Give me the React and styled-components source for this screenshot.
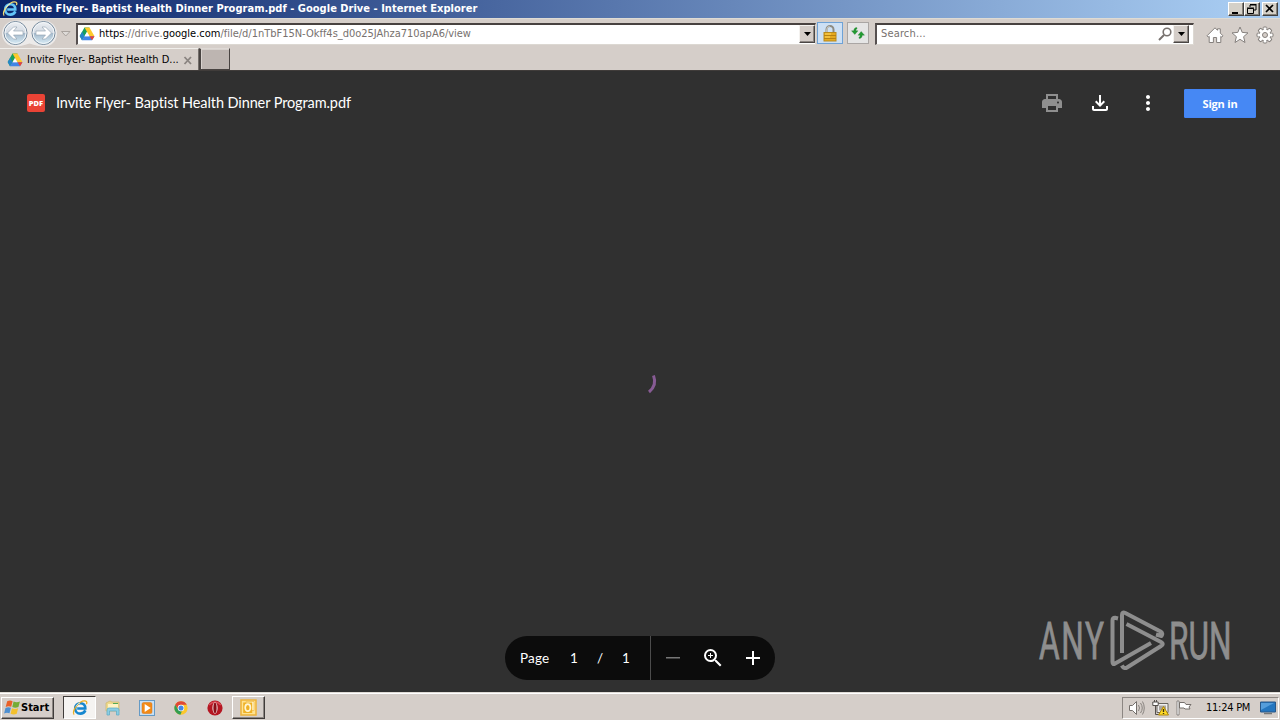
import React from "react";
import styled, { createGlobalStyle } from "styled-components";

const Global = createGlobalStyle`
  * { box-sizing: border-box; }
  body { margin: 0; overflow: hidden; background: #303030; }
  svg { display: block; flex: none; overflow: visible; }
`;

const ui = `"DejaVu Sans Condensed", "DejaVu Sans", sans-serif`;

const Screen = styled.div`
  width: 1280px;
  height: 720px;
  display: flex;
  flex-direction: column;
  overflow: hidden;
  font-family: ${ui};
  font-stretch: condensed;
  font-size: 11px;
`;

const Label = styled.span`
  white-space: pre;
  flex: none;
  line-height: 14px;
  margin-left: ${(p) => p.$left || 0}px;
  letter-spacing: ${(p) => p.$spacing || 0}px;
  color: ${(p) => p.$color || "#000"};
  font-weight: ${(p) => (p.$bold ? 700 : 400)};
`;

const TitleBar = styled.header`
  height: 18px;
  flex: none;
  display: flex;
  align-items: center;
  gap: 1px;
  padding: 0 2px;
  background: linear-gradient(90deg, #0a246a 0%, #a6caf0 96%);
`;

const WindowButtons = styled.div`
  margin-left: auto;
  display: flex;
`;

const WindowButton = styled.div`
  width: 16px;
  height: 14px;
  margin-left: ${(p) => p.$gap || 0}px;
  background: #d4d0c8;
  border: 1px solid;
  border-color: #fff #404040 #404040 #fff;
  box-shadow: inset -1px -1px #858078;
`;

const NavBar = styled.div`
  height: 30px;
  flex: none;
  display: flex;
  align-items: flex-start;
  padding: 3px 6px 0 1px;
  background: #d5cec9;
  border-top: 1px solid #dedbd4;
`;

const History = styled.div`
  width: 75px;
  margin-top: -2px;
`;

const Field = styled.div`
  width: ${(p) => p.$width}px;
  height: 22px;
  margin-left: ${(p) => p.$left || 0}px;
  margin-top: 1px;
  display: flex;
  align-items: center;
  padding: 0 ${(p) => p.$end || 0}px 2px ${(p) => p.$pad}px;
  background: #fff;
  border: 1px solid #dcd8d2;
  border-top: 2px solid #484240;
  border-left: 2px solid #565050;
`;

const DropButton = styled.div`
  width: 16px;
  height: 18px;
  margin-left: ${(p) => p.$left || "auto"};
  display: grid;
  place-items: center;
  background: #d4cdc8;
  border: 1px solid;
  border-color: #f4f2ef #4a4644 #4a4644 #f4f2ef;
  box-shadow: inset -1px -1px #8c8682;
`;

const ToolButton = styled.div`
  width: ${(p) => p.$width}px;
  height: 22px;
  margin-left: ${(p) => p.$gap}px;
  display: grid;
  place-items: center;
  background: ${(p) => p.$bg};
  border: 1px solid ${(p) => p.$border};
`;

const NavTools = styled.div`
  margin-left: auto;
  margin-top: 4px;
  display: flex;
  gap: 7px;
`;

const TabRow = styled.div`
  height: 23px;
  flex: none;
  display: flex;
  align-items: flex-start;
  background: #d5cec9;
  border-bottom: 1px solid #403c3a;
`;

const Tab = styled.div`
  width: 199px;
  height: 22px;
  display: flex;
  align-items: center;
  padding: 1px 6px 0 7px;
  background: #d5cec9;
  border-top: 1px solid #f0eeeb;
  border-right: 1px solid #75706c;
`;

const NewTab = styled.div`
  width: 31px;
  height: 22px;
  background: #bdb5b1;
  border: 1px solid #484341;
  border-left-width: 2px;
  border-top-color: #ded9d5;
  box-shadow: inset 1px 1px #d8d2ce;
`;

const End = styled.div`
  margin-left: auto;
`;

const Viewer = styled.main`
  height: 621px;
  flex: none;
  display: flex;
  flex-direction: column;
  background: #303030;
  position: relative;
  font-family: "Open Sans", sans-serif;
  font-stretch: normal;
`;

const ViewerHeader = styled.div`
  height: 64px;
  flex: none;
  display: flex;
  align-items: center;
  padding: 0 24px 0 27px;
`;

const PdfBadge = styled.div`
  width: 18px;
  height: 18px;
  flex: none;
  margin-right: 11px;
  border-radius: 2px;
  background: #ea4335;
  color: #fff;
  font: 800 7.5px/18px "Open Sans", sans-serif;
  text-align: center;
`;

const FileName = styled.h1`
  margin: 0;
  white-space: nowrap;
  color: #fff;
  font: 400 14.5px/20px Lato, sans-serif;
  letter-spacing: -0.1px;
`;

const Actions = styled.div`
  margin-left: auto;
  display: flex;
  align-items: center;
  gap: 24px;
`;

const SignIn = styled.button`
  width: 72px;
  height: 29px;
  padding: 0;
  color: #fff;
  background: #4688f4;
  border: 1px solid #4384f5;
  border-radius: 1px;
  font: 700 11px/27px "Open Sans", sans-serif;
  letter-spacing: -0.2px;
`;

const Loading = styled.div`
  flex: 1;
  display: flex;
  justify-content: center;
  padding-top: 235px;
`;

const PageControls = styled.div`
  width: 270px;
  height: 44px;
  flex: none;
  margin: 0 auto 12px;
  display: flex;
  align-items: center;
  border-radius: 22px;
  background: #0c0c0c;
  color: #fff;
  font: 400 13.5px/20px Lato, sans-serif;
`;

const PageInfo = styled.div`
  width: 146px;
  height: 44px;
  display: grid;
  grid-template-columns: 44px 20px 32px 20px;
  align-items: center;
  padding-left: 15px;
  border-right: 1px solid #4c4c4c;
  & > span:first-child { letter-spacing: 0.2px; }
  & > span:not(:first-child) { text-align: center; }
`;

const ZoomTools = styled.div`
  display: flex;
  gap: 16px;
  padding-left: 10px;
`;

const Watermark = styled.div`
  position: absolute;
  left: 1036px;
  top: 539px;
`;

const Taskbar = styled.footer`
  height: 28px;
  flex: none;
  display: flex;
  align-items: center;
  padding: 2px 1px 0;
  background: #d5cec9;
  border-top: 1px solid #e0dcd6;
  box-shadow: inset 0 1px #fff;
`;

const StartButton = styled.div`
  width: 53px;
  height: 22px;
  margin-right: 9px;
  display: flex;
  align-items: center;
  padding-left: 2px;
  border: 1px solid;
  border-color: #fff #403c3a #403c3a #fff;
  box-shadow: inset -1px -1px #8c8682;
`;

const Task = styled.div`
  width: ${(p) => p.$width || 34}px;
  height: 23px;
  display: grid;
  place-items: center;
  border: 1px solid transparent;
  ${(p) => p.$state === "pressed" && `background: #f5f3f1; border-color: #403c3a #fff #fff #403c3a;`}
  ${(p) => p.$state === "raised" && `border-color: #fff #403c3a #403c3a #fff; box-shadow: inset -1px -1px #8c8682;`}
`;

const Tray = styled.div`
  width: 157px;
  height: 22px;
  margin-left: auto;
  display: flex;
  align-items: center;
  padding: 0 2px 0 5px;
  border: 1px solid;
  border-color: #8c8682 #fff #fff #8c8682;
`;

const TrayIcons = styled.div`
  display: flex;
  align-items: center;
  gap: 6px;
`;

const Caret = () => <svg width="7" height="4" viewBox="0 0 7 4"><path d="M0 0h7L3.5 4z" fill="#000" /></svg>;

const DriveLogo = () => (
  <svg width="16" height="16" viewBox="0 0 16 16">
    <path d="M5.5 1.5h5L5.3 10.3 3 14.3.7 10z" fill="#18a05d" />
    <path d="M5.5 1.5h5l5 8.7h-5z" fill="#fdc92c" />
    <path d="M5.4 10.2h10L13 14.3H3z" fill="#4285e8" />
    <path d="M.7 10L3 14.3l2.5-4.1-2.3-4.4z" fill="#2685c8" />
    <path d="M10.5 10.2h5L13 14.3z" fill="#ea4335" />
    <path d="M8 6.3l2.3 3.9H5.7z" fill="#fff" />
  </svg>
);

const IeLogo = ({ size, light }) => (
  <svg width={size} height={size} viewBox="0 0 16 16" fill="none">
    <path d="M13.4 10.4C12.4 12.6 10.6 13.6 8.3 13.6 5.2 13.6 3.2 11.2 3.2 8.4S5.4 3.2 8.4 3.2c3.2 0 5 2.2 4.9 5.3H5.2" stroke={light ? "#62c4f8" : "#1687cf"} strokeWidth="2.6" />
    <path d="M2.2 14.6C-1.2 12.2 7.2-.4 13.8 1.1c1.3.4 1.2 1.8.6 3" stroke={light ? "#f5dc74" : "#e9ad21"} strokeWidth="1.3" />
    <path d="M4.2 6.5C5 4.4 6.4 3.3 8 3.2" stroke="#c5edff" strokeWidth=".9" />
  </svg>
);

const HistoryArrows = () => (
  <svg width="75" height="27" viewBox="0 0 75 27">
    <defs>
      <linearGradient id="orb" x1="0" y1="0" x2="0" y2="1">
        <stop offset="0" stopColor="#eceff3" /><stop offset=".48" stopColor="#d3dae3" />
        <stop offset=".5" stopColor="#a3b8ca" /><stop offset="1" stopColor="#d9edf7" />
      </linearGradient>
    </defs>
    <path d="M14 .5h29a13 13 0 010 26q-6 0-14.5-3-8.500 3-14.500 3a13 13 0 010-26z" fill="#eceae9" />
    {[14.5, 42.5].map((x) => (
      <g key={x} transform={`translate(${x} 13)`}>
        <circle r="11.5" fill="url(#orb)" stroke="#74899c" />
        <circle r="10.5" fill="none" stroke="#f4f8fa" />
        <path transform={x > 20 ? "scale(-1 1)" : undefined} d="M-8 0l6-6h3.500L-2 -2H7.500v4H-2l3.500 4h-3.500z" fill="#fff" stroke="#8d9eac" strokeWidth=".6" />
      </g>
    ))}
    <path d="M60.500 11.500h8.500L64.750 16z" fill="#dedbd8" stroke="#a9a39e" />
  </svg>
);

const Lock = () => (
  <svg width="14" height="17" viewBox="0 0 14 17">
    <path d="M3.5 8V4.5a3.5 3.5 0 017 0V8" fill="none" stroke="#8d8b82" strokeWidth="2" />
    <path d="M3.7 8V4.5a3.3 3.3 0 013-3.2" fill="none" stroke="#e8e6dc" strokeWidth=".7" />
    <rect x="1" y="7.5" width="12" height="8.5" fill="#e5a91f" stroke="#b98a1c" />
    <path d="M1 10.5h12M1 13.5h12" stroke="#b88212" /><path d="M2 8.5h6v1H2zm0 3h5v1H2z" fill="#ffd75c" />
  </svg>
);

const Refresh = () => (
  <svg width="16" height="14" viewBox="0 0 16 14" fill="#239b32" stroke="#137025" strokeWidth=".3">
    <path d="M6.800 1.500C4.800 1.600 3.800 2.800 3.800 4.800H1.500L4.800 8.500l3.200-3.700H5.900c0-1 .2-1.600 1.200-2z" />
    <path d="M9.200 12.500c2-.1 3-1.300 3-3.300h2.300L11.200 5.500 8 9.200h2.100c0 1-.2 1.600-1.200 2z" />
  </svg>
);

const Home = () => (
  <svg width="18" height="18" viewBox="0 0 18 18"><path d="M9 1.800l2.500 2.500V2.800h2.800v4.300L17 9.800l-1.300 1.300-.9-.8v6.200h-4.200v-5H7.400v5H3.200v-6.200l-.9.8L1 9.800z" fill="#fff" stroke="#85807d" /></svg>
);
const Star = () => (
  <svg width="18" height="18" viewBox="0 0 18 18"><path d="M9 1l2.200 5.400 5.800.5-4.400 3.800 1.400 5.800L9 13.300l-5 3.200 1.400-5.800L1 6.900l5.800-.5z" fill="#fff" stroke="#85807d" /></svg>
);
const Gear = () => (
  <svg width="18" height="18" viewBox="0 0 18 18">
    <g fill="#fff" stroke="#85807d">
      {[0, 45, 90, 135].map((a) => <rect key={a} x="7.2" y="1" width="3.600" height="16" rx=".8" transform={`rotate(${a} 9 9)`} />)}
      <circle cx="9" cy="9" r="5.800" />
    </g>
    {[0, 45, 90, 135].map((a) => <rect key={a} x="7.700" y="2" width="2.600" height="14" fill="#fff" transform={`rotate(${a} 9 9)`} />)}
    <circle cx="9" cy="9" r="2.500" fill="#d5cec9" stroke="#85807d" />
  </svg>
);

const Material = ({ d, color = "#fff", size = 24 }) => <svg width={size} height={size} viewBox="0 0 24 24" fill={color}><path d={d} /></svg>;

const AnyRun = () => (
  <svg width="200" height="64" viewBox="0 0 200 64">
    <g fill="#8e8e8e" stroke="#8e8e8e" strokeWidth=".8" fontFamily="Roboto, sans-serif" fontSize="51">
      <text transform="translate(3 49) scale(.62 1)" textLength="105" lengthAdjust="spacing">ANY</text>
      <text transform="translate(133 49) scale(.62 1)" textLength="101" lengthAdjust="spacing">RUN</text>
    </g>
    <g fill="none" stroke="#8e8e8e" strokeWidth="4" strokeLinejoin="round">
      <path d="M82 8.500l-3-.7q-2.500 0-2.500 2.800v41.500q0 3 2.600 1.400L115 33" />
      <path d="M86 43V5q0-3.800 3.300-2L124.500 21.500q3 2 1 4.500L120 24.500" />
      <path d="M90.500 14L125 32q3.500 2 0 4L91 57.500q-3 1.800-5.200-2" />
    </g>
  </svg>
);

const WindowsLogo = () => (
  <svg width="17" height="17" viewBox="0 0 16 16">
    <path d="M3 2.200C5 1 6.500 1.200 8.100 2L6.800 7.300C5 6.500 3.300 6.600 1.600 7.500z" fill="#e96028" />
    <path d="M9 2.400c2 1 4 .9 6 0l-1.400 5.200c-2 .9-3.800.9-5.800 0z" fill="#75ac35" />
    <path d="M1.400 8.400c1.800-.9 3.400-.9 5.100-.1l-1.300 5.100c-1.800-.8-3.400-.7-5.100.2z" fill="#4e8fd0" />
    <path d="M7.500 8.600c2 1 3.800.9 5.800 0L12 13.800c-2 .9-3.800.9-5.800 0z" fill="#f4c12d" />
  </svg>
);

const Folder = () => (
  <svg width="16" height="16" viewBox="0 0 16 16">
    <path d="M1 3l4-2 2 1h7v9H1z" fill="#eed98c" stroke="#cdb76d" strokeWidth=".7" />
    <path d="M3 4h10v4H3z" fill="#fff3c4" /><path d="M8 3h5v1H8z" fill="#52a957" />
    <path d="M2 10q0-2 2-2h8q2 0 2 2v5h-2.500v-4h-7v4H2z" fill="#8bcde2" stroke="#62adc9" strokeWidth=".8" />
  </svg>
);
const MediaPlayer = () => (
  <svg width="16" height="16" viewBox="0 0 16 16">
    <rect x=".5" y=".5" width="15" height="15" fill="#c7e0f5" stroke="#659ac5" />
    <rect x="3" y="2.500" width="10" height="11" rx="1.500" fill="#f28a17" stroke="#d8751a" strokeWidth=".5" /><path d="M5.700 4l6 4-6 4z" fill="#fff" />
  </svg>
);
const Chrome = () => (
  <svg width="14" height="14" viewBox="0 0 16 16">
    <circle cx="8" cy="8" r="7.600" fill="#fbc72c" />
    <path d="M1.400 4.200A7.600 7.600 0 0114.600 4.200H8A3.800 3.800 0 004.300 9z" fill="#df4738" />
    <path d="M1.400 4.200L4.700 9.800A3.800 3.800 0 009 11.700l-1.700 3.900A7.600 7.600 0 011.400 4.200z" fill="#329d52" />
    <circle cx="8" cy="8" r="3.700" fill="#fff" /><circle cx="8" cy="8" r="2.900" fill="#4386e5" />
  </svg>
);
const Opera = () => (
  <svg width="16" height="16" viewBox="0 0 16 16"><circle cx="8" cy="8" r="7.600" fill="#b51622" /><path d="M2.200 5q5.800-6 11.600 0" stroke="#db4c57" strokeWidth="1.500" fill="none" /><ellipse cx="8" cy="8" rx="2.600" ry="5.800" fill="#f3dfdf" /><ellipse cx="8" cy="8" rx="1.600" ry="5.200" fill="#8a0d16" /></svg>
);
const Outlook = () => (
  <svg width="17" height="17" viewBox="0 0 17 17"><rect x="1" y="1" width="15" height="15" fill="#ffe391" stroke="#eeb338" strokeWidth="1.500" /><path d="M6 2.500h8v9H6z" fill="#fff4cd" stroke="#eeb338" strokeWidth=".6" /><rect x="3.200" y="3.500" width="9" height="10.500" fill="#efb126" /><ellipse cx="7.800" cy="8.700" rx="2.600" ry="3.500" fill="none" stroke="#fff5d5" strokeWidth="1.700" /></svg>
);

const Speaker = () => (
  <svg width="18" height="16" viewBox="0 0 18 16" fill="none" stroke="#75706c"><path d="M1.500 5.500h3l4-4v13l-4-4h-3z" fill="#fff" /><path d="M10.500 5q2 3 0 6M12.500 3q3.500 5 0 10M14.500 1.500q3.500 6.500 0 13" stroke="#88837f" /></svg>
);
const Network = () => (
  <svg width="18" height="16" viewBox="0 0 18 16"><path d="M5 3.500h11v9H5z" fill="#eee" stroke="#69645f" /><path d="M7 5.500h7v5H7z" fill="#aaa59f" /><path d="M.8 2h5.400v3.500H.8z" fill="#fff" stroke="#55504c" /><path d="M2.500 0v2M4.500 0v2M3.500 6v8.500H8" fill="none" stroke="#55504c" /><path d="M11.500 6.500l5 8.500h-10z" fill="#ffdb25" stroke="#ad850c" /><path d="M11.500 9v3m0 1v1" stroke="#3b3010" strokeWidth="1.400" /></svg>
);
const Flag = () => (
  <svg width="16" height="16" viewBox="0 0 16 16"><path d="M3.500 2.500h5l1.500 2h5l-2 2.500 1 2H9L8 8H3.500z" fill="#fff" stroke="#75706c" /><path d="M1 1h2v14H1z" fill="#fff" stroke="#75706c" strokeWidth=".8" /></svg>
);
const Desktop = () => (
  <svg width="16" height="14" viewBox="0 0 16 14"><path d="M.5 1h15v10H.5z" fill="#2576bf" stroke="#285789" /><path d="M1 2h13L1 9z" fill="#559ddb" /><path d="M4 12.500h8" stroke="#777" strokeWidth="1.500" /></svg>
);

export default function App() {
  return (
    <Screen>
      <Global />
      <TitleBar>
        <IeLogo size={16} light />
        <Label $bold $color="#fff" $left={1} $spacing={0.02}>Invite Flyer- Baptist Health Dinner Program.pdf - Google Drive - Internet Explorer</Label>
        <WindowButtons>
          <WindowButton><svg width="14" height="12"><path d="M3 9h6v2H3z" /></svg></WindowButton>
          <WindowButton><svg width="14" height="12" fill="none" stroke="#000"><path d="M5 4V2h6v5H9M5 1.500h6.500M2.500 5.500h6v5h-6zM2 5h7" /></svg></WindowButton>
          <WindowButton $gap={2}><svg width="14" height="12"><path d="M3 2l7 7M10 2L3 9" stroke="#000" strokeWidth="1.700" /></svg></WindowButton>
        </WindowButtons>
      </TitleBar>
      <NavBar>
        <History><HistoryArrows /></History>
        <Field $width={740} $pad={1}>
          <DriveLogo />
          <Label $left={4}>https</Label><Label $color="#77716e">://drive.</Label><Label>google.com</Label><Label $color="#77716e" $spacing={-0.02}>/file/d/1nTbF15N-Okff4s_d0o25JAhza710apA6/view</Label>
          <DropButton><Caret /></DropButton>
        </Field>
        <ToolButton $width={26} $gap={1} $bg="#cde0f4" $border="#6ea2d6"><Lock /></ToolButton>
        <ToolButton $width={22} $gap={4} $bg="#e5e5e5" $border="#aaa6a4"><Refresh /></ToolButton>
        <Field $width={319} $pad={4} $end={4} $left={6}>
          <Label $color="#77716e" $spacing={0.15}>Search...</Label>
          <End><svg width="14" height="14" viewBox="0 0 14 14"><circle cx="9" cy="5" r="3.800" fill="none" stroke="#77716e" strokeWidth="1.600" /><path d="M6 8l-5 5" stroke="#77716e" strokeWidth="2" /></svg></End>
          <DropButton $left="1px"><Caret /></DropButton>
        </Field>
        <NavTools><Home /><Star /><Gear /></NavTools>
      </NavBar>
      <TabRow>
        <Tab>
          <DriveLogo />
          <Label $left={4} $spacing={-0.01}>Invite Flyer- Baptist Health D...</Label>
          <End><svg width="9" height="9"><path d="M1.500 1l6.500 7M8 1L1.500 8" stroke="#8a8480" strokeWidth="1.800" /></svg></End>
        </Tab>
        <NewTab />
      </TabRow>
      <Viewer>
        <ViewerHeader>
          <PdfBadge>PDF</PdfBadge>
          <FileName>Invite Flyer- Baptist Health Dinner Program.pdf</FileName>
          <Actions>
            <Material color="#8f8f8f" d="M19 8h-1V3H6v5H5c-1.660 0-3 1.340-3 3v6h4v4h12v-4h4v-6c0-1.660-1.340-3-3-3zM8 5h8v3H8V5zm8 14H8v-4h8v4zm2-6.500c-.55 0-1-.45-1-1s.45-1 1-1 1 .45 1 1-.45 1-1 1z" />
            <Material d="M4 15h2v3h12v-3h2v3c0 1.100-.9 2-2 2H6c-1.100 0-2-.9-2-2v-3zm7-11h2v8.170l2.590-2.580L17 11l-5 5-5-5 1.410-1.410L11 12.170V4z" />
            <Material d="M12 8c1.100 0 2-.9 2-2s-.9-2-2-2-2 .9-2 2 .9 2 2 2zm0 2c-1.100 0-2 .9-2 2s.9 2 2 2 2-.9 2-2-.9-2-2-2zm0 6c-1.100 0-2 .9-2 2s.9 2 2 2 2-.9 2-2-.9-2-2-2z" />
            <SignIn>Sign in</SignIn>
          </Actions>
        </ViewerHeader>
        <Loading>
          <svg width="40" height="40"><path d="M33.500 5.500C35.800 11.500 34.500 17.500 29 22" fill="none" stroke="#875b94" strokeWidth="3" /></svg>
        </Loading>
        <PageControls>
          <PageInfo><span>Page</span><span>1</span><span>/</span><span>1</span></PageInfo>
          <ZoomTools>
            <Material color="#777" d="M5 11h14v1.500H5z" />
            <Material d="M15.500 14h-.79l-.28-.27A6.471 6.471 0 0 0 16 9.500 6.500 6.500 0 1 0 9.500 16c1.610 0 3.090-.59 4.230-1.570l.27.28v.79l5 4.990L20.490 19l-4.990-5zm-6 0C7.010 14 5 11.990 5 9.500S7.010 5 9.500 5 14 7.010 14 9.500 11.990 14 9.500 14zm.5-7H9v2H7v1h2v2h1v-2h2V9h-2z" />
            <Material d="M19 13h-6v6h-2v-6H5v-2h6V5h2v6h6z" />
          </ZoomTools>
        </PageControls>
        <Watermark><AnyRun /></Watermark>
      </Viewer>
      <Taskbar>
        <StartButton><WindowsLogo /><Label $bold>Start</Label></StartButton>
        <Task $width={33} $state="pressed"><IeLogo size={16} /></Task>
        <Task><Folder /></Task>
        <Task><MediaPlayer /></Task>
        <Task><Chrome /></Task>
        <Task><Opera /></Task>
        <Task $width={33} $state="raised"><Outlook /></Task>
        <Tray>
          <TrayIcons><Speaker /><Network /><Flag /></TrayIcons>
          <Label $left={14} $spacing={-0.25}>11:24 PM</Label>
          <End><Desktop /></End>
        </Tray>
      </Taskbar>
    </Screen>
  );
}
